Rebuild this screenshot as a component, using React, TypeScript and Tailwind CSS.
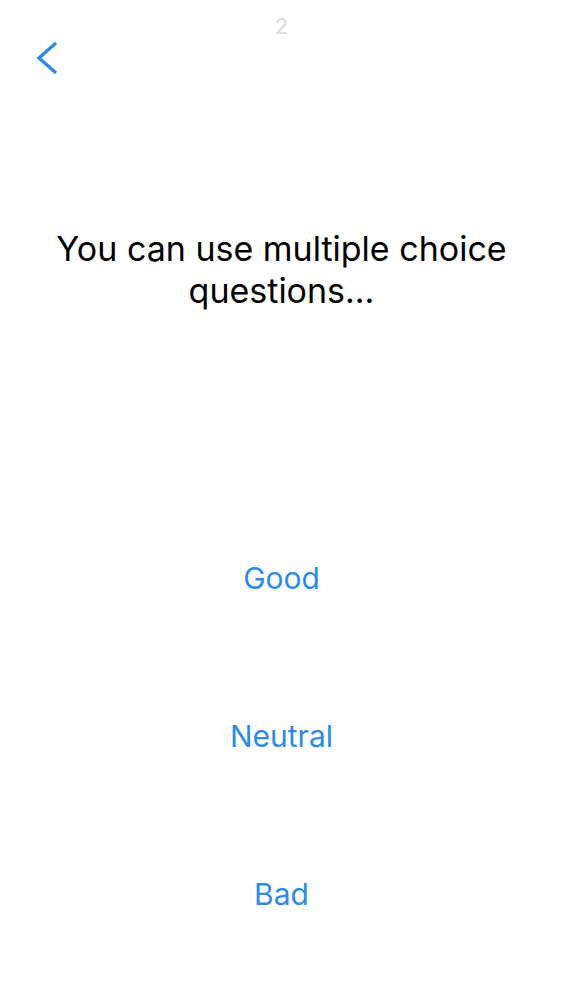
import React from "react";

export default function App() {
  const options = ["Good", "Neutral", "Bad"];
  return (
    <div
      className="w-[563px] h-[1000px] bg-white flex flex-col overflow-hidden"
      style={{ fontFamily: "Inter, 'Noto Sans', sans-serif" }}
    >
      <div className="pt-[15px] h-[37px] text-center text-[22px] leading-[22px] text-[#dcdcdc]">
        2
      </div>
      <div className="mt-[4px] pl-[36px] h-[34px]">
        <svg width="24" height="34" viewBox="0 0 24 34" fill="none">
          <polyline
            points="20,2 3,17 20,32"
            stroke="#2f8ae6"
            strokeWidth="3.4"
            strokeLinecap="butt"
            strokeLinejoin="miter"
          />
        </svg>
      </div>
      <div className="mt-[153px] px-[30px] text-center text-black text-[34px] leading-[42px]">
        You can use multiple choice questions...
      </div>
      <div className="mt-[248px] flex flex-col">
        {options.map((o) => (
          <div
            key={o}
            className="h-[158px] text-center text-[30px] leading-[36px] text-[#2f8ae6]"
          >
            {o}
          </div>
        ))}
      </div>
    </div>
  );
}
